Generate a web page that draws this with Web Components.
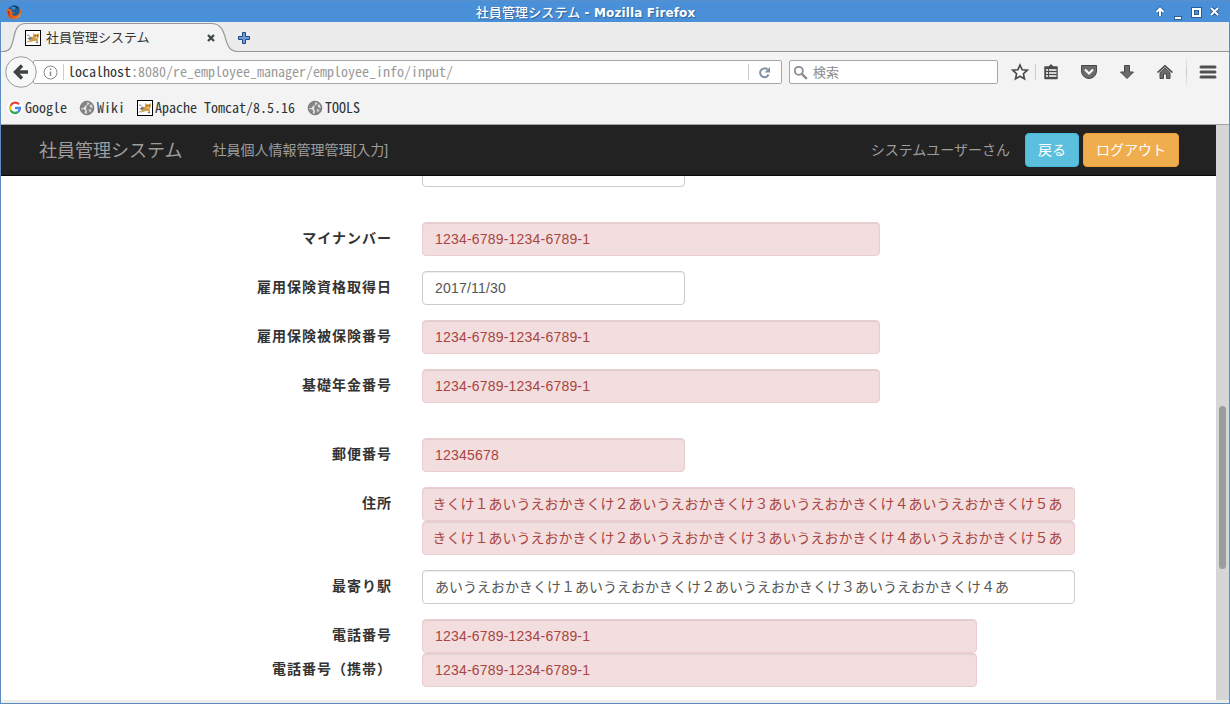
<!DOCTYPE html>
<html lang="ja">
<head>
<meta charset="utf-8">
<title>社員管理システム</title>
<style>
html,body{margin:0;height:100%;overflow:hidden;background:#fff}
body{font-family:"Liberation Sans","Noto Sans CJK JP",sans-serif;font-size:14px}
</style>
</head>
<body>
<browser-window>
  <title-bar slot="chrome"></title-bar>
  <tab-strip slot="chrome">社員管理システム</tab-strip>
  <nav-toolbar slot="chrome"></nav-toolbar>
  <bookmarks-bar slot="chrome">
    <book-mark icon="google">Google</book-mark>
    <book-mark icon="globe" style="margin-left:12px">Wiki</book-mark>
    <book-mark icon="cat" style="margin-left:12px">Apache Tomcat/8.5.16</book-mark>
    <book-mark icon="globe" style="margin-left:12px">TOOLS</book-mark>
  </bookmarks-bar>
  <app-navbar></app-navbar>
  <employee-form>
    <text-field w="263" style="margin-top:-23px"></text-field>
    <form-row label="マイナンバー" style="margin-top:35px"><text-field w="458" error>1234-6789-1234-6789-1</text-field></form-row>
    <form-row label="雇用保険資格取得日"><text-field w="263">2017/11/30</text-field></form-row>
    <form-row label="雇用保険被保険番号"><text-field w="458" error>1234-6789-1234-6789-1</text-field></form-row>
    <form-row label="基礎年金番号"><text-field w="458" error>1234-6789-1234-6789-1</text-field></form-row>
    <form-row label="郵便番号" style="margin-top:35px"><text-field w="263" error>12345678</text-field></form-row>
    <form-row label="住所"><text-field w="653" error long>きくけ１あいうえおかきくけ２あいうえおかきくけ３あいうえおかきくけ４あいうえおかきくけ５あ</text-field></form-row>
    <form-row label="" style="margin-top:0"><text-field w="653" error long>きくけ１あいうえおかきくけ２あいうえおかきくけ３あいうえおかきくけ４あいうえおかきくけ５あ</text-field></form-row>
    <form-row label="最寄り駅"><text-field w="653" kana>あいうえおかきくけ１あいうえおかきくけ２あいうえおかきくけ３あいうえおかきくけ４あ</text-field></form-row>
    <form-row label="電話番号"><text-field w="555" error>1234-6789-1234-6789-1</text-field></form-row>
    <form-row label="電話番号（携帯）" style="margin-top:0"><text-field w="555" error>1234-6789-1234-6789-1</text-field></form-row>
  </employee-form>
  <scroll-bar slot="side"></scroll-bar>
</browser-window>
<script>
const define = (name, html) => customElements.define(name, class extends HTMLElement {
  constructor() {
    super();
    this.attachShadow({mode: 'open'}).innerHTML = typeof html === 'function' ? html(this) : html;
  }
});

const icons = {
  firefox: `<svg width="16" height="16" viewBox="0 0 16 16"><circle cx="8" cy="8" r="6.600" fill="#1c5d9c"/><path d="M6 2.200C8 .8 12 1.600 13.600 5 12 4 10 4 9 5.500L6.500 5Z" fill="#153a66"/><path d="M5 3.500c2-1 4-.8 5 .5L8 6Z" fill="#3c8ed0"/><path d="M1.200 3.500C.4 6 .4 9 1.500 11.500 3 14.500 6 15.600 9 15.200c4-.5 6.300-4 6-7.700-.2-2-1-3.500-2-4.500.8 2 .9 4 .2 5.500-.8 2.400-3 3.600-5 3.200-1.500-.3-2.500-1.400-2.500-2.500 1 .7 2.500.5 3.300-.5C7.500 9 6 8 5.500 7L6.600 6C5.600 5.300 4.500 5 3.500 5.200 2.500 4.800 1.700 4.300 1.200 3.500Z" fill="#e4641c"/><path d="M14.300 5.500c1 4-1 8-5.300 9 4-.3 6.300-3 5.300-9Z" fill="#ffd24a"/><path d="M1.500 7c0 4 2.500 6.500 6 7C4 13 3 10.500 3.500 7Z" fill="#b92b12"/></svg>`,
  cat: `<svg width="16" height="16" viewBox="0 0 16 16"><rect x=".5" y=".5" width="15" height="15" fill="#fff" stroke="#000"/><path d="M2 5.500c1.200-1 2.300-.2 3 1M2 12.500 4 10.500" stroke="#777" fill="none"/><path d="M4 8C5.500 6.800 7 6.800 8.300 6.500L8 3l1.800 1.200h2.400L14 3l-.3 4L12.500 9.500l.8 3-3.300-1.700L7 11.500l-3.500 1.300L5 10.500Z" fill="#cf9d48"/><path d="M2.500 8.500 6 6.800 7 8.500 4.500 10ZM10 12l3 1.500V12Z" fill="#777"/><path d="M9.700 5.800h1M12 5.800h1" stroke="#6b4a18"/><path d="M10 7.700h2.500" stroke="#f3dca8"/></svg>`,
  google: `<svg width="16" height="16" viewBox="0 0 16 16"><circle cx="8" cy="8" r="8" fill="#fff"/><g fill="none" stroke-width="2.300"><path d="M12 4.300A5 5 0 0 0 3.600 5.800" stroke="#ea4335"/><path d="M3.600 5.800A5 5 0 0 0 3.600 10.300" stroke="#fbbc05"/><path d="M3.600 10.300A5 5 0 0 0 11 12" stroke="#34a853"/><path d="M8 8h5c0 1.800-.8 3.200-2 4" stroke="#4285f4"/></g></svg>`,
  globe: `<svg width="16" height="16" viewBox="0 0 16 16"><circle cx="8" cy="8" r="6.800" fill="#858585" stroke="#777"/><path d="M8.500 2 10.500 3 9 5 6.500 5.500 4.500 8 2 8.500 2 9.500 4.500 9 6.500 11 5.500 13 7.500 14 8 11 7 9ZM10.500 5 12.500 4.500 14 8 11.500 7.500ZM9.500 9.500 12.500 9.500 11 12.500Z" fill="#e4e4e4"/></svg>`
};

define('browser-window', `
<style>
:host{display:flex;flex-direction:column;box-sizing:border-box;width:1230px;height:704px;padding:0 1px 1px;background:#5b8dc4;overflow:hidden}
.mid{display:flex;height:575px}
.page{width:1215px;background:#fff;overflow:hidden}
.foot{height:3px;background:#ececeb}
</style>
<slot name="chrome"></slot>
<div class="mid"><div class="page"><slot></slot></div><slot name="side"></slot></div>
<div class="foot"></div>`);

define('title-bar', `
<style>
:host{display:flex;align-items:center;box-sizing:border-box;height:22px;flex:none;margin:0 -1px;padding:1px 9px 1px 6px;background:#4a90d9;border-top:1px solid #5a8fc9;color:#fff;border-radius:4px 4px 0 0}
svg{display:block}
.t{flex:1;display:flex;justify-content:center;align-items:center;white-space:pre;font:bold 12px/18px "DejaVu Sans","Noto Sans CJK JP",sans-serif;letter-spacing:.13px;text-shadow:1px 1px 1px #2c5f98;padding:2px 6px 0 0}
.jp{font:500 13px/18px "Noto Sans CJK JP",sans-serif;margin-top:-2px}
</style>
${icons.firefox}
<div class="t"><span class="jp">社員管理システム</span><span> - Mozilla Firefox</span></div>
<svg width="66" height="16" viewBox="0 0 66 16" fill="none"><g stroke="#2b5e97" stroke-width="4"><path d="M5 12V5M1.500 8 5 4.500 8.500 8M19 14h8M38 5h7v7h-7ZM56 4l7 7M63 4l-7 7"/></g><g stroke="#fff" stroke-width="2"><path d="M5 12V5M1.500 8 5 4.500 8.500 8M20 14h6M38 5h7v7h-7ZM56 4l7 7M63 4l-7 7"/></g></svg>`);

define('tab-strip', `
<style>
:host{display:block;height:30px;flex:none;background:#ececec;overflow:hidden}
.wrap{display:grid;width:1228px;height:30px}
.wrap>*{grid-area:1/1}
.row{display:flex;align-items:center;padding-left:24px;height:32px}
.name{margin:-2px 0 0 5px;width:159px;font:13px/18px "Noto Sans CJK JP",sans-serif;color:#333;white-space:nowrap}
svg{display:block}
</style>
<div class="wrap">
<svg width="1228" height="30"><path d="M0 29.500H2C18 29.500 7 1.500 25 1.500H210C230 1.500 219 29.500 237 29.500H1228V31H0Z" fill="#f3f3f3"/><path d="M0 29.500H2C18 29.500 7 1.500 25 1.500H210C230 1.500 219 29.500 237 29.500H1228" fill="none" stroke="#959799" stroke-width="1.200"/></svg>
<div class="row">${icons.cat}<span class="name"><slot></slot></span>
<svg width="10" height="10" viewBox="0 0 10 10" style="margin-left:1px"><path d="m2 2 6 6M8 2 2 8" stroke="#3f4749" stroke-width="2.300"/></svg>
<svg width="12" height="12" viewBox="0 0 12 12" style="margin-left:22px"><path d="M4.500.5h3v4h4v3h-4v4h-3v-4h-4v-3h4Z" fill="#6a9ed4" stroke="#204a87"/></svg></div>
</div>`);

define('nav-toolbar', `
<style>
:host{display:flex;align-items:center;height:40px;flex:none;background:#f3f3f3;padding-left:4px;font:14px/22px "Noto Sans CJK JP",sans-serif}
svg{display:block;flex:none}
.back{z-index:1}
.url,.search{display:flex;align-items:center;box-sizing:border-box;height:24px;background:#fff;border:1px solid #a5a7a8;border-radius:2px}
.url{width:749px;margin-left:-4px;padding-left:9px}
.sep{width:1px;height:16px;background:#ccc}
.addr{flex:1;margin:-2px 0 0 4px;font:14px/20px "Noto Sans Mono CJK JP","Liberation Mono",monospace;color:#999;white-space:nowrap}
.addr b{font-weight:400;color:#2e3436}
.search{width:209px;margin-left:7px;padding-left:3px;color:#8a8c8e;font-size:13px}
.search span{margin-left:5px}
.tools{display:flex;align-items:center;height:40px}
</style>
<svg class="back" width="32" height="32" viewBox="0 0 32 32"><circle cx="16" cy="16" r="15.300" fill="#f8f8f8" stroke="#999b9c"/><path d="M17 9.500 10.500 16l6.500 6.500M11 16h12" fill="none" stroke="#3e4446" stroke-width="3.400"/></svg>
<div class="url">
<svg width="15" height="15" viewBox="0 0 15 15"><circle cx="7.500" cy="7.500" r="6.500" fill="none" stroke="#888"/><path d="M7.500 6.500V11M7.500 3.500v1.500" stroke="#888" stroke-width="1.500"/></svg>
<i class="sep" style="margin-left:5px"></i><span class="addr"><b>localhost</b>:8080/re_employee_manager/employee_info/input/</span>
<i class="sep"></i><svg width="13" height="13" viewBox="0 0 13 13" style="margin:0 10px 0 9px"><path d="M9.500 3.500A4.400 4.400 0 1 0 10.600 8.500" fill="none" stroke="#8093a6" stroke-width="2"/><path d="M12 1v5.500H6.500Z" fill="#8093a6"/></svg></div>
<div class="search"><svg width="15" height="15" viewBox="0 0 15 15"><circle cx="5.800" cy="5.800" r="4" fill="none" stroke="#8a8c8e" stroke-width="1.800"/><path d="m8.800 8.800 5 5" stroke="#8a8c8e" stroke-width="2.400"/></svg><span>検索</span></div>
<div class="tools">
<svg width="18" height="18" viewBox="0 0 18 18" style="margin-left:13px"><path d="m9 2 2.100 4.700 5.100.5-3.800 3.500 1.100 5.200L9 13.200l-4.500 2.700 1.100-5.200L1.800 7.200l5.100-.5Z" fill="#fafafa" stroke="#484848" stroke-width="1.600"/></svg>
<i class="sep" style="margin-left:6px"></i>
<svg width="16" height="16" viewBox="0 0 16 16" style="margin-left:7px"><path d="M2 3h4l2-2 2 2h4v11.500H2Z" fill="#4c4c4c" stroke="#4c4c4c" stroke-width="1.500" stroke-linejoin="round"/><path d="M3 6h2M6 6h7.500M3 9h2M6 9h7.500M3 12h2M6 12h7.500" stroke="#fff" stroke-width="1.500"/></svg>
<svg width="18" height="16" viewBox="0 0 18 16" style="margin-left:21px"><path d="M1.500 1.500h15V7A7.500 7.500 0 0 1 1.500 7Z" fill="#6c6c6c" stroke="#484848" stroke-linejoin="round"/><path d="m5 5.500 4 4 4-4" stroke="#fff" stroke-width="2" fill="none"/></svg>
<svg width="16" height="16" viewBox="0 0 16 16" style="margin-left:21px"><path d="M5.500 1.500h5V8h4L8 14.500 1.500 8h4Z" fill="#6a6a6a" stroke="#484848"/></svg>
<svg width="18" height="16" viewBox="0 0 18 16" style="margin-left:21px"><path d="M4 8.500 9 4l5 4.500v6h-3.500V10h-3v4.500H4Z" fill="#6c6c6c" stroke="#484848"/><path d="M1.500 8.500 9 1.800l7.500 6.700" fill="none" stroke="#484848" stroke-width="1.600"/></svg>
<i class="sep" style="height:34px;margin-left:12px;background:linear-gradient(#f3f3f3,#c8c8c8,#f3f3f3)"></i>
<svg width="18" height="16" viewBox="0 0 18 16" style="margin-left:12px"><path d="M2 3h14M2 8h14M2 13h14" stroke="#505050" stroke-width="3" stroke-linecap="round"/></svg>
</div>`);

define('bookmarks-bar', `
<style>:host{display:flex;align-items:center;box-sizing:border-box;height:33px;flex:none;background:#f3f3f3;border-bottom:1px solid #a3a3a3;padding-left:6px}</style><slot></slot>`);

define('book-mark', el => `
<style>
:host{display:flex;align-items:center;font:14px/20px "Noto Sans Mono CJK JP","Liberation Mono",monospace;color:#2e3436;white-space:pre}
svg{margin-right:2px;flex:none}
span{margin-top:-2px}
</style>${icons[el.getAttribute('icon')]}<span><slot></slot></span>`);

define('app-navbar', `
<style>
:host{display:flex;align-items:center;box-sizing:border-box;position:relative;z-index:1;height:51px;background:#222;border-bottom:1px solid #080808;padding:0 37px 0 38px;color:#9d9d9d;font-size:14px;white-space:nowrap}
span{margin-top:-2px}
.brand{font-size:18px;margin-right:30px}
.user{margin-left:auto;margin-right:15px}
button{box-sizing:border-box;height:34px;padding:6px 12px;border:1px solid;border-radius:4px;color:#fff;font:inherit;line-height:20px;margin:0}
.b{background:#5bc0de;border-color:#46b8da;margin-right:4px}
.o{background:#f0ad4e;border-color:#eea236}
</style>
<span class="brand">社員管理システム</span><span>社員個人情報管理管理[入力]</span>
<span class="user">システムユーザーさん</span><button class="b">戻る</button><button class="o">ログアウト</button>`);

define('employee-form', `
<style>:host{display:block}::slotted(text-field){margin-left:421px}</style><slot></slot>`);

define('form-row', el => `
<style>
:host{display:flex;height:34px;margin-top:15px}
label{box-sizing:border-box;width:391px;margin-right:30px;padding-top:5px;text-align:right;font:bold 14px/20px "Noto Sans CJK JP",sans-serif;letter-spacing:1px;color:#333;white-space:nowrap}
</style><label>${el.getAttribute('label')}</label><slot></slot>`);

define('text-field', el => `
<style>
:host{display:block;box-sizing:border-box;width:${el.getAttribute('w')}px;height:34px;border:1px solid #ccc;border-radius:4px;padding:6px 12px;background:#fff;color:#555;line-height:20px;letter-spacing:.2px;box-shadow:inset 0 1px 1px rgba(0,0,0,.075);white-space:nowrap;overflow:hidden}
:host([error]){background:#f2dede;border-color:#ebccd1;color:#a94442}
:host([long]),:host([kana]){letter-spacing:0}
:host([long]){padding-left:9.500px}
</style><slot></slot>`);

define('scroll-bar', `
<style>:host{display:flex;flex-direction:column;width:13px;background:#d6d6d6}
i{width:7px;height:163px;margin:281px 0 0 3px;border-radius:4px;background:#9b9c9d}</style><i></i>`);
</script>
</body>
</html>
